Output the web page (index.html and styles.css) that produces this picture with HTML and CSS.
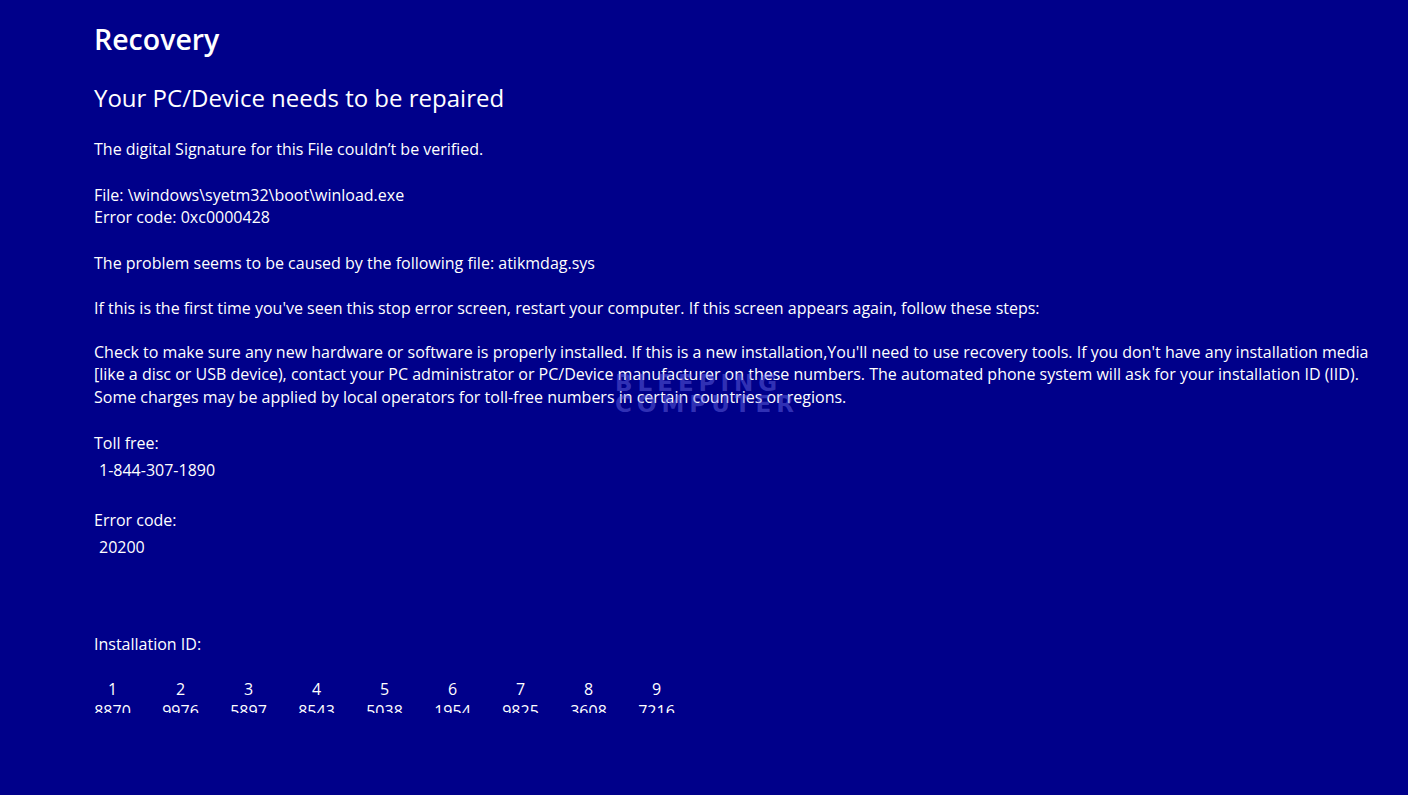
FILE: index.html
```html
<!DOCTYPE html>
<html lang="en">
<head>
<meta charset="utf-8">
<title>Recovery</title>
<link rel="stylesheet" href="styles.css">
</head>
<body>
<main class="screen">
  <h1 class="title">Recovery</h1>
  <h2 class="subtitle">Your PC/Device needs to be repaired</h2>
  <p class="para para-first">The digital Signature for this File couldn’t be verified.</p>
  <p class="para">File: \windows\syetm32\boot\winload.exe<br>Error code: 0xc0000428</p>
  <p class="para">The problem seems to be caused by the following file: atikmdag.sys</p>
  <p class="para">If this is the first time you've seen this stop error screen, restart your computer. If this screen appears again, follow these steps:</p>
  <p class="para para-last">Check to make sure any new hardware or software is properly installed. If this is a new installation,You'll need to use recovery tools. If you don't have any installation media<br>[like a disc or USB device), contact your PC administrator or PC/Device manufacturer on these numbers. The automated phone system will ask for your installation ID (IID).<br>Some charges may be applied by local operators for toll-free numbers in certain countries or regions.</p>
  <div class="field">
    <div class="label">Toll free:</div>
    <div class="value">1-844-307-1890</div>
  </div>
  <div class="field field-code">
    <div class="label">Error code:</div>
    <div class="value">20200</div>
  </div>
  <div class="install">
    <div class="label">Installation ID:</div>
    <div class="id-clip">
      <div class="id-grid">
        <span>1</span><span>8870</span>
        <span>2</span><span>9976</span>
        <span>3</span><span>5897</span>
        <span>4</span><span>8543</span>
        <span>5</span><span>5038</span>
        <span>6</span><span>1954</span>
        <span>7</span><span>9825</span>
        <span>8</span><span>3608</span>
        <span>9</span><span>7216</span>
      </div>
    </div>
  </div>
  <div class="watermark"><span>BLEEPING</span><span>COMPUTER</span></div>
</main>
</body>
</html>
```
FILE: styles.css
```css
html, body {
  margin: 0;
  padding: 0;
  background: #00008a;
  height: 100%;
  overflow: hidden;
}
body {
  font-family: "Open Sans", "Noto Sans", sans-serif;
  color: #ffffff;
}
.screen {
  position: relative;
  padding: 19px 0 0 94px;
  box-sizing: border-box;
  height: 795px;
}
.title {
  margin: 0;
  font-size: 28.5px;
  font-weight: 600;
  line-height: 40px;
}
.subtitle {
  margin: 23px 0 0;
  font-size: 24px;
  font-weight: 400;
  line-height: 32px;
}
.para {
  margin: 23px 0 0;
  font-size: 16px;
  line-height: 22.5px;
  white-space: nowrap;
}
.para-first { margin-top: 24px; }
.para-last { margin-top: 21px; }
.field {
  margin-top: 24px;
  font-size: 16px;
  line-height: 22px;
}
.field .value {
  margin-top: 5px;
  padding-left: 5px;
}
.field-code { margin-top: 28px; }
.install {
  margin-top: 75px;
  font-size: 16px;
  line-height: 22px;
}
.id-clip {
  margin-top: 23px;
  height: 35px;
  overflow: hidden;
}
.id-grid {
  display: grid;
  grid-template-rows: 22px 22px;
  grid-auto-flow: column;
  grid-auto-columns: 37px;
  column-gap: 31px;
  text-align: center;
}
.watermark {
  position: absolute;
  left: 615px;
  top: 373px;
  display: flex;
  flex-direction: column;
  font-family: "DejaVu Sans", sans-serif;
  font-weight: bold;
  font-size: 23px;
  line-height: 21px;
  letter-spacing: 5px;
  color: rgba(110, 110, 235, 0.45);
  pointer-events: none;
}
```
